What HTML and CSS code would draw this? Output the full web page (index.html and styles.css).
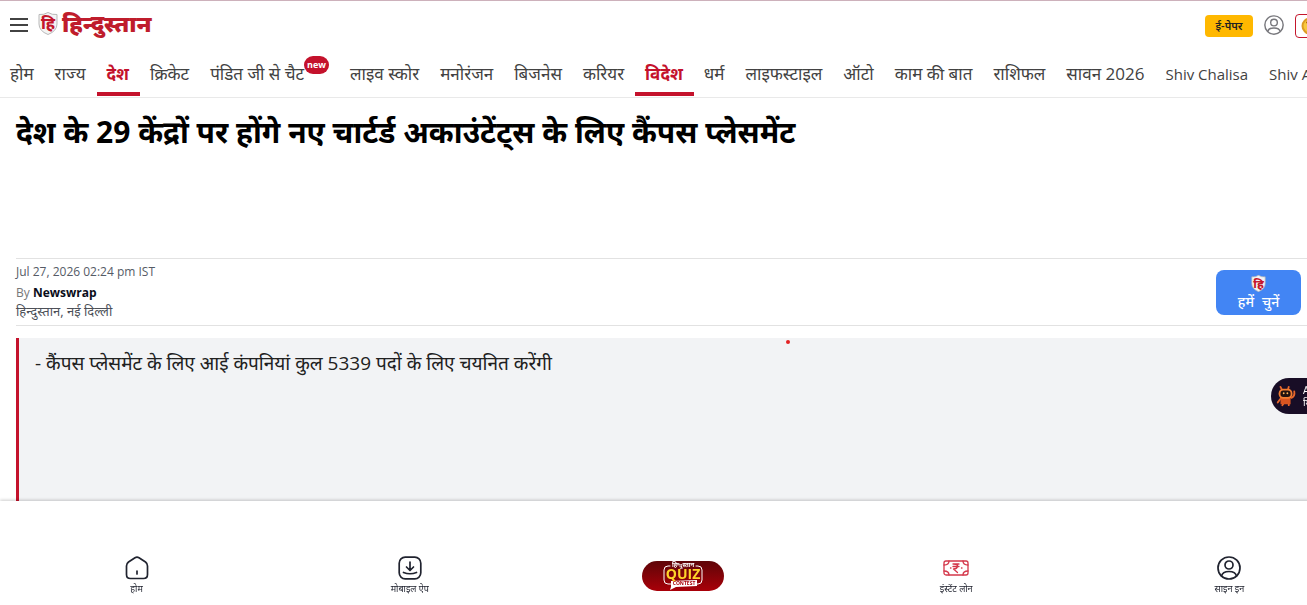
FILE: index.html
```html
<!DOCTYPE html>
<html lang="hi">
<head>
<meta charset="utf-8">
<meta name="viewport" content="width=device-width, initial-scale=1">
<title>हिन्दुस्तान</title>
<link rel="stylesheet" href="styles.css">
</head>
<body>
<svg class="defs" aria-hidden="true">
  <symbol id="shield" viewBox="0 0 20 23">
    <path d="M1 2.500Q6 3 10 .5Q14 3 19 2.500V12Q19 19 10 22.500Q1 19 1 12Z" fill="#f4f4f4" stroke="#b9b9b9"/>
    <text class="shield-letter" x="10" y="17">हि</text>
  </symbol>
  <symbol id="user" viewBox="0 0 24 24">
    <g fill="none" stroke="currentColor" stroke-width="1.700">
      <circle cx="12" cy="12" r="11"/><circle cx="12" cy="9" r="4"/><path d="M4.500 20Q5.500 15.500 12 15.500T19.500 20"/>
    </g>
  </symbol>
</svg>
<header class="header">
  <div class="topbar">
    <button class="menu" aria-label="मेन्यू"><span></span><span></span><span></span></button>
    <a class="brand" href="#"><svg class="brand-mark"><use href="#shield"/></svg><span>हिन्दुस्तान</span></a>
    <div class="actions">
      <a class="epaper" href="#">ई-पेपर</a>
      <a class="account" href="#" aria-label="साइन इन"><svg><use href="#user"/></svg></a>
      <a class="coins" href="#" aria-label="सिक्के">
        <svg viewBox="0 0 18 18"><circle cx="9" cy="9" r="8.500" fill="#dc9b23"/><circle cx="9" cy="9" r="6.500" fill="#f8c83e"/><path d="M5 5.500H7V12M10 6V12H13" fill="none" stroke="#b06a10" stroke-width="1.500"/></svg>
      </a>
    </div>
  </div>
  <nav class="nav">
    <a href="#">होम</a><a href="#">राज्य</a><a class="active" href="#">देश</a><a href="#">क्रिकेट</a><a class="chat" href="#">पंडित जी से चैट<sup>new</sup></a><a href="#">लाइव स्कोर</a><a href="#">मनोरंजन</a><a href="#">बिजनेस</a><a href="#">करियर</a><a class="active" href="#">विदेश</a><a href="#">धर्म</a><a href="#">लाइफस्टाइल</a><a href="#">ऑटो</a><a href="#">काम की बात</a><a href="#">राशिफल</a><a href="#">सावन 2026</a><a class="latin" href="#">Shiv Chalisa</a><a class="latin" href="#">Shiv Aarti</a>
  </nav>
</header>
<main class="article">
  <h1>देश के 29 केंद्रों पर होंगे नए चार्टर्ड अकाउंटेंट्स के लिए कैंपस प्लेसमेंट</h1>
  <div class="meta">
    <div class="byline">
      <time>Jul 27, 2026 02:24 pm IST</time>
      <p>By <a href="#">Newswrap</a></p>
      <p class="place">हिन्दुस्तान, नई दिल्ली</p>
    </div>
    <button class="choose"><svg><use href="#shield"/></svg><span class="choose-label"><span>हमें</span> <span>चुनें</span></span></button>
  </div>
  <div class="summary">
    <p>- कैंपस प्लेसमेंट के लिए आई कंपनियां कुल 5339 पदों के लिए चयनित करेंगी</p>
    <span class="dot"></span>
  </div>
</main>
<a class="assistant" href="#">
  <svg viewBox="0 0 24 24">
    <g fill="none" stroke="#e8662a" stroke-width="2" stroke-linecap="round"><path d="M8 6L6 2M14 6L15 2M18 14Q22 12 21 7M6 15L3 19M10 19L8 22M15 19V22"/></g>
    <path d="M6 14H17L17 21H6Z" fill="#d95521"/>
    <rect x="4" y="4" width="15" height="11" rx="5" fill="#f27d32"/><rect x="6" y="6" width="11" height="7" rx="3" fill="#20120f"/>
    <circle cx="9.500" cy="9" r="1" fill="#ffb45a"/><circle cx="13.500" cy="9" r="1" fill="#ffb45a"/>
  </svg>
  <span>AI<br>मित्र</span>
</a>
<nav class="bottom">
  <a href="#"><svg viewBox="0 0 24 24"><path d="M1.500 10Q1.500 7.500 3.500 6L10 1.700Q12 .5 14 1.700L20.500 6Q22.500 7.500 22.500 10V18.500Q22.500 22.500 18.500 22.500H5.500Q1.500 22.500 1.500 18.500ZM12 15V18"/></svg><span>होम</span></a>
  <a href="#"><svg viewBox="0 0 24 24"><rect x="1.200" y="1.200" width="21.600" height="21.600" rx="6"/><path d="M12 6V14M8.500 11L12 14.500L15.500 11M5.500 16.500Q12 19 18.500 16.500"/></svg><span>मोबाइल ऐप</span></a>
  <a class="quiz" href="#">
    <svg viewBox="0 0 82 30" role="img" aria-label="हिन्दुस्तान Quiz Contest">
      <defs><linearGradient id="pill" x2="0" y2="1"><stop stop-color="#5e0508"/><stop offset="1" stop-color="#a90009"/></linearGradient></defs>
      <rect width="82" height="30" rx="15" fill="url(#pill)"/>
      <path d="M28 5H26Q22 5 22 9V19Q22 23 26 23H29M54 5H56Q60 5 60 9V19Q60 23 56 23H54" fill="none" stroke="#fff" stroke-width="1"/>
      <path d="M29 20L55 19V25L34 26L28 29L29 26Z" fill="#fff"/>
      <text class="quiz-name" x="41" y="6">हिन्दुस्तान</text><text class="quiz-word" x="41" y="18">QUIZ</text><text class="quiz-sub" x="42" y="24">CONTEST</text>
    </svg>
  </a>
  <a class="loan" href="#"><svg viewBox="0 0 26 24"><rect x="1" y="5" width="24" height="14" rx="2"/><path d="M6 5Q6 9 1 9M20 5Q20 9 25 9M1 15Q6 15 6 19M25 15Q20 15 20 19M10 8H16M10 10.500H16M10.500 8Q15 8 14.500 10.500Q14 13 10.500 13L14.500 16.500M7.500 12H8M18.500 12H19"/></svg><span>इंस्टेंट लोन</span></a>
  <a href="#"><svg><use href="#user"/></svg><span>साइन इन</span></a>
</nav>
</body>
</html>
```
FILE: styles.css
```css
* { box-sizing: border-box; }
body {
  margin: 0;
  min-height: 100vh;
  display: flex;
  flex-direction: column;
  overflow-x: hidden;
  background: #fff;
  color: #424242;
  font-family: "Open Sans", "Noto Sans", "Noto Sans Devanagari", sans-serif;
}
a { color: inherit; text-decoration: none; }
h1, p { margin: 0; }
button { border: 0; padding: 0; background: none; font: inherit; cursor: pointer; }
svg { display: block; }
.defs { position: absolute; width: 0; height: 0; }
.shield-letter { fill: #c4162c; font-size: 16px; font-weight: 800; text-anchor: middle; }

.header { border-top: 1px solid #cdb1bb; border-bottom: 1px solid #e9e9e9; overflow: hidden; }
.topbar { display: flex; align-items: center; height: 48px; padding-left: 10px; }
.menu { display: flex; flex-direction: column; gap: 4px; width: 18px; }
.menu span { height: 2px; background: #424242; }
.brand { display: flex; align-items: center; gap: 4px; margin-left: 10px; padding-bottom: 4px; color: #bf1d2c; font-size: 23px; font-weight: 900; line-height: 20px; }
.brand-mark { width: 20px; height: 23px; }
.actions { display: flex; align-items: center; gap: 11px; margin-left: auto; margin-right: -21px; padding-top: 2px; }
.epaper { width: 48px; border-radius: 4px; background: #ffb800; color: #222; font-size: 11px; font-weight: 600; line-height: 22px; text-align: center; }
.account { padding-bottom: 2px; }
.account svg { width: 20px; height: 20px; color: #77777c; }
.coins { display: flex; align-items: center; width: 33px; height: 24px; padding-left: 5px; border: 1px solid #c4162c; border-radius: 4px; }
.coins svg { width: 18px; height: 18px; }

.nav { display: flex; height: 48px; white-space: nowrap; }
.nav a { flex: none; height: 47px; padding: 0 11px 0 10px; font-size: 17px; line-height: 49px; }
.nav .latin { font-size: 15px; line-height: 50px; }
.nav .active { border-bottom: 4px solid #c4122c; color: #c4122c; font-weight: 700; }
.nav .chat { display: flex; }
.nav sup { height: 18px; margin-top: 7px; padding: 0 3px; border-radius: 9px; background: #c4122c; color: #fff; font-size: 9px; font-weight: 700; line-height: 18px; }

.article { flex: 1; display: flex; flex-direction: column; padding-left: 16px; }
h1 { min-height: 160px; padding-top: 12px; color: #000; font-size: 30px; font-weight: 700; line-height: 44px; }
.meta { display: flex; align-items: center; justify-content: space-between; padding: 3px 6px 4px 0; border-top: 1px solid #e2e2e2; border-bottom: 1px solid #e2e2e2; font-size: 12px; line-height: 18px; }
.byline { color: #555b66; }
.byline time { display: block; line-height: 20px; margin-bottom: 2px; }
.byline p { color: #777; }
.byline a { color: #0a0d1a; font-weight: 700; }
.byline .place { margin-bottom: 1px; color: #4c5058; font-size: 13px; }
.choose { display: flex; flex-direction: column; align-items: center; width: 85px; height: 45px; margin-top: 2px; padding-top: 5px; border-radius: 8px; background: #4285f4; color: #fff; font-size: 14px; font-weight: 500; line-height: 20px; }
.choose-label { display: flex; gap: 8px; }
.choose svg { width: 15px; height: 17px; }
.summary { position: relative; flex: 1; margin-top: 12px; padding: 9px 16px; border-left: 3px solid #c4122c; background: #f2f3f5; color: #212121; font-size: 19px; line-height: 32px; }
.dot { position: absolute; left: calc(60% - 6px); top: 2px; width: 4px; height: 4px; border-radius: 50%; background: #e32222; }

.assistant { position: fixed; right: 0; top: 378px; display: flex; align-items: center; gap: 6px; width: 36px; height: 36px; padding-left: 4px; overflow: hidden; border-radius: 18px 0 0 18px; background: #180d26; color: #fff; font-size: 10px; line-height: 12px; }
.assistant svg { flex: none; width: 22px; height: 24px; }

.bottom { position: sticky; bottom: 0; display: flex; height: 104px; margin-right: -59px; padding-top: 55px; background: #fff; box-shadow: 0 -1px 3px #0003; color: #20232f; }
.bottom a { flex: 1; display: flex; flex-direction: column; align-items: center; font-size: 9px; line-height: 18px; }
.bottom svg { width: 24px; height: 24px; fill: none; stroke: currentColor; stroke-width: 1.7; stroke-linecap: round; stroke-linejoin: round; }
.bottom .loan svg { width: 26px; stroke: #d4384b; stroke-width: 1.3; }
.bottom .quiz svg { width: 82px; height: 30px; margin-top: 5px; stroke: none; }
.quiz text { text-anchor: middle; font-weight: 700; }
.quiz-name { fill: #fff; font-size: 6px; }
.quiz-word { fill: #ffd529; font-size: 14px; }
.quiz-sub { fill: #a90009; font-size: 5px; }
```
